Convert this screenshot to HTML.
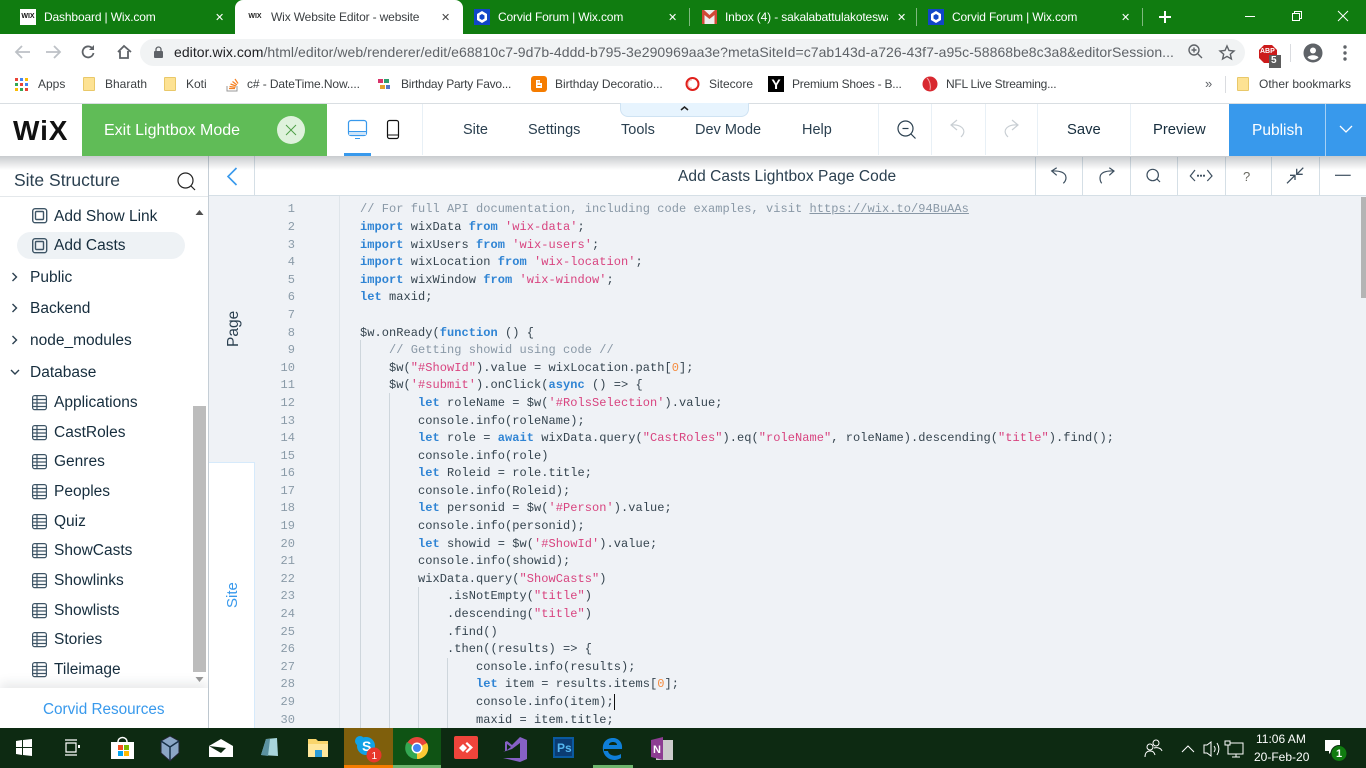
<!DOCTYPE html>
<html><head><meta charset="utf-8"><title>Wix Website Editor</title>
<style>
html,body{margin:0;padding:0;width:1366px;height:768px;overflow:hidden;background:#fff;font-family:"Liberation Sans",sans-serif}
.a{position:absolute;white-space:nowrap}
svg{position:absolute;overflow:visible}
.tab{color:#fff;font-size:12px;letter-spacing:-.15px;top:10px}
.x{color:#fff;font-size:11px;top:11px}
.bm{font-size:12px;color:#3c4043;top:77px}
.folder{position:absolute;top:77px;width:12px;height:14px;background:#fde293;border:1px solid #e9c869;box-sizing:border-box;border-radius:1px}
.menu{font-size:14.5px;color:#2b4050;top:122px}
.dv{position:absolute;top:104px;height:51px;width:1px;background:#e8f0f6}
.side{font-size:15.5px;color:#162d3d;left:54px}
.tree{font-size:15.5px;color:#162d3d;left:30px}
.ed{position:absolute;top:157px;height:38px;width:1px;background:#d5dfe6}
pre{margin:0;position:absolute;font-family:"Liberation Mono",monospace;font-size:12px;line-height:17.6px;letter-spacing:.048px}
.k{color:#2f84d4;font-weight:bold}.s{color:#d8437f}.n{color:#f58c3f}.c{color:#8998a6}
.g{position:absolute;width:1px;background:#ced6dc}
</style></head><body>

<!-- tab strip -->
<div class="a" style="left:0;top:0;width:1366px;height:34px;background:#107c10"></div>
<div class="a" style="left:235px;top:0;width:228px;height:34px;background:#fff;border-radius:8px 8px 0 0"></div>
<div class="a" style="left:20px;top:9px;width:16px;height:16px;background:#fff;color:#111;font:bold 7px 'Liberation Sans',sans-serif;line-height:16px;text-align:center">WIX</div>
<div class="a tab" style="left:44px">Dashboard | Wix.com</div>
<div class="a x" style="left:215px">✕</div>
<div class="a" style="left:247px;top:9px;width:16px;height:16px;color:#222;font:bold 7px 'Liberation Sans',sans-serif;line-height:16px;text-align:center">WIX</div>
<div class="a tab" style="left:271px;color:#3c4043;width:158px;overflow:hidden">Wix Website Editor - website</div>
<div class="a x" style="left:441px;color:#444">✕</div>
<svg style="left:474px;top:9px" width="16" height="16"><rect width="16" height="16" fill="#1146c8"/><path d="M8 2l5 3v6l-5 3-5-3V5z" fill="#fff"/><path d="M8 5l2.500 1.500v3L8 11 5.500 9.500v-3z" fill="#1146c8"/></svg>
<div class="a tab" style="left:498px">Corvid Forum | Wix.com</div>
<div class="a x" style="left:668px">✕</div>
<div class="a" style="left:689px;top:8px;width:1px;height:18px;background:#7fb97f"></div>
<svg style="left:702px;top:10px" width="15" height="14"><rect width="15" height="14" fill="#eee"/><path d="M0 0h2l5.500 5L13 0h2v14h-2.500V5L7.500 9 2.500 5v9H0z" fill="#d14836"/></svg>
<div class="a tab" style="left:725px;width:163px;overflow:hidden">Inbox (4) - sakalabattulakoteswar</div>
<div class="a x" style="left:897px">✕</div>
<div class="a" style="left:916px;top:8px;width:1px;height:18px;background:#7fb97f"></div>
<svg style="left:928px;top:9px" width="16" height="16"><rect width="16" height="16" fill="#1146c8"/><path d="M8 2l5 3v6l-5 3-5-3V5z" fill="#fff"/><path d="M8 5l2.500 1.500v3L8 11 5.500 9.500v-3z" fill="#1146c8"/></svg>
<div class="a tab" style="left:952px">Corvid Forum | Wix.com</div>
<div class="a x" style="left:1121px">✕</div>
<div class="a" style="left:1142px;top:8px;width:1px;height:18px;background:#7fb97f"></div>
<svg style="left:1159px;top:11px" width="12" height="12"><path d="M6 0v12M0 6h12" stroke="#fff" stroke-width="2"/></svg>
<svg style="left:1245px;top:10px" width="105" height="14" fill="none" stroke="#fff"><path d="M0 6.500h10"/><rect x="47.500" y="3.500" width="7" height="7"/><path d="M49.500 3.500v-2h7v7h-2"/><path d="M93 1l10 10M103 1L93 11"/></svg>

<!-- toolbar -->
<svg style="left:14px;top:44px" width="120" height="16" fill="none"><path d="M16 8H2M8 2L2 8l6 6" stroke="#bdc1c6" stroke-width="1.800"/><path d="M32 8h14M40 2l6 6-6 6" stroke="#bdc1c6" stroke-width="1.800"/><path d="M78 4a5.500 5.500 0 1 0 1.500 5" stroke="#5f6368" stroke-width="1.800"/><path d="M80 1v5h-5z" fill="#5f6368"/><path d="M104 8l6-6 7 6M106 7v7h8V7" stroke="#5f6368" stroke-width="1.800"/></svg>
<div class="a" style="left:140px;top:39px;width:1105px;height:27px;background:#f1f3f4;border-radius:14px"></div>
<svg style="left:154px;top:46px" width="10" height="13"><rect y="5" width="9" height="7" rx="1" fill="#5f6368"/><path d="M2 6V3.500a2.500 2.500 0 0 1 5 0V6" fill="none" stroke="#5f6368" stroke-width="1.300"/></svg>
<div class="a" style="left:174px;top:44px;font-size:14px;color:#5f6368;letter-spacing:.055px"><span style="color:#202124">editor.wix.com</span>/html/editor/web/renderer/edit/e68810c7-9d7b-4ddd-b795-3e290969aa3e?metaSiteId=c7ab143d-a726-43f7-a95c-58868be8c3a8&amp;editorSession...</div>
<svg style="left:1188px;top:44px" width="50" height="16" fill="none" stroke="#5f6368" stroke-width="1.400"><circle cx="6" cy="6" r="5"/><path d="M10 10l4 4M3.500 6h5M6 3.500v5"/><path d="M39 2l2 4.500 5 .5-3.700 3.200 1.100 4.800-4.400-2.600-4.400 2.600 1.100-4.800L32 7l5-.5z"/></svg>
<svg style="left:1258px;top:44px" width="26" height="24"><path d="M6 1h8l5 5v8l-5 5H6l-5-5V6z" fill="#cc1b1b"/><rect x="11" y="11" width="12" height="13" fill="#5c5c5c"/></svg>
<div class="a" style="left:1260px;top:48px;color:#fff;font:bold 7px 'Liberation Sans',sans-serif">ABP</div>
<div class="a" style="left:1271px;top:55px;color:#fff;font:bold 10px 'Liberation Sans',sans-serif">5</div>
<div class="a" style="left:1290px;top:44px;width:1px;height:18px;background:#dadce0"></div>
<svg style="left:1303px;top:43px" width="20" height="20"><circle cx="10" cy="10" r="9.500" fill="#5f6368"/><circle cx="10" cy="7.500" r="3" fill="#fff"/><path d="M4.500 14.500c1.500-3 9.500-3 11 0a7.500 7.500 0 0 1-11 0z" fill="#fff"/></svg>
<svg style="left:1343px;top:45px" width="4" height="16" fill="#5f6368"><circle cx="2" cy="2" r="1.700"/><circle cx="2" cy="8" r="1.700"/><circle cx="2" cy="14" r="1.700"/></svg>

<!-- bookmarks -->
<svg style="left:15px;top:78px" width="13" height="13"><g fill="#ea4335"><rect width="3" height="3"/></g><rect x="5" width="3" height="3" fill="#4285f4"/><rect x="10" width="3" height="3" fill="#fbbc05"/><rect y="5" width="3" height="3" fill="#34a853"/><rect x="5" y="5" width="3" height="3" fill="#ea4335"/><rect x="10" y="5" width="3" height="3" fill="#4285f4"/><rect y="10" width="3" height="3" fill="#fbbc05"/><rect x="5" y="10" width="3" height="3" fill="#34a853"/><rect x="10" y="10" width="3" height="3" fill="#ea4335"/></svg>
<div class="a bm" style="left:38px">Apps</div>
<div class="folder" style="left:83px"></div><div class="a bm" style="left:105px">Bharath</div>
<div class="folder" style="left:164px"></div><div class="a bm" style="left:186px">Koti</div>
<svg style="left:226px;top:77px" width="13" height="15" fill="none"><path d="M1 9v5h10V9" stroke="#999"/><path d="M3 11.500h6M3.500 9.500l6 .8M4.500 7l5.500 2M6.500 4.500l4.500 3.500M9 2l3 4.500" stroke="#f48024" stroke-width="1.200"/></svg>
<div class="a bm" style="left:247px;letter-spacing:-.1px">c# - DateTime.Now....</div>
<svg style="left:378px;top:78px" width="13" height="13"><rect x="0" y="1" width="5" height="4" fill="#d8336b"/><rect x="6" y="1" width="5" height="4" fill="#2f9e6e"/><rect x="2" y="7" width="5" height="4" fill="#e2a12c"/><rect x="8" y="7" width="4" height="4" fill="#5477c5"/></svg>
<div class="a bm" style="left:401px;letter-spacing:-.24px">Birthday Party Favo...</div>
<svg style="left:531px;top:76px" width="16" height="16"><rect width="16" height="16" rx="3" fill="#f57c00"/><path d="M5 4h4v3h2v5H5z" fill="#fff"/><rect x="6.500" y="5.500" width="2" height="1" fill="#f57c00"/><rect x="6.500" y="9" width="3" height="1" fill="#f57c00"/></svg>
<div class="a bm" style="left:555px;letter-spacing:-.05px">Birthday Decoratio...</div>
<svg style="left:685px;top:76px" width="15" height="16" fill="none"><circle cx="7.500" cy="8" r="6" stroke="#e0201b" stroke-width="2"/><path d="M7 4a4 4 0 0 0 0 8" stroke="#f5b5b0"/></svg>
<div class="a bm" style="left:709px">Sitecore</div>
<div class="a" style="left:768px;top:76px;width:16px;height:16px;background:#000;color:#fff;font:bold 14px/16px 'Liberation Sans',sans-serif;text-align:center">Y</div>
<div class="a bm" style="left:792px;letter-spacing:-.22px">Premium Shoes - B...</div>
<svg style="left:922px;top:76px" width="16" height="16"><circle cx="8" cy="8" r="7.500" fill="#d8282f"/><path d="M5 2c3 3 4 8 3 12" stroke="#f4a9a9" fill="none"/></svg>
<div class="a bm" style="left:946px;letter-spacing:-.25px">NFL Live Streaming...</div>
<div class="a" style="left:1205px;top:76px;font-size:13px;color:#5f6368">»</div>
<div class="a" style="left:1225px;top:76px;width:1px;height:17px;background:#dadce0"></div>
<div class="folder" style="left:1237px"></div><div class="a bm" style="left:1259px">Other bookmarks</div>

<!-- wix top bar -->
<div class="a" style="left:0;top:103px;width:1366px;height:1px;background:#d9dee2"></div>
<div class="a" style="left:620px;top:103px;width:129px;height:14px;background:#e7f4fe;border:1px solid #cfe3f3;border-top:0;border-radius:0 0 8px 8px;box-sizing:border-box"></div>
<svg style="left:680px;top:105px" width="9" height="6"><path d="M1 5l3.500-3L8 5" fill="none" stroke="#222" stroke-width="1.500"/></svg>
<div class="a" style="left:13px;top:113px;font:bold 28px/36px 'Liberation Sans',sans-serif;color:#111;letter-spacing:.9px">WiX</div>
<div class="a" style="left:82px;top:104px;width:245px;height:52px;background:#60bc57"></div>
<div class="a" style="left:104px;top:122px;font-size:16px;color:#fff;font-weight:normal">Exit Lightbox Mode</div>
<div class="a" style="left:277px;top:116px;width:28px;height:28px;border-radius:50%;background:#dff2dc"></div>
<svg style="left:285px;top:124px" width="12" height="12"><path d="M1 1l10 10M11 1L1 11" stroke="#4f9f47" stroke-width="1"/></svg>
<svg style="left:348px;top:120px" width="52" height="22" fill="none"><rect x=".5" y=".5" width="18" height="15" rx="2.500" stroke="#3899ec" stroke-width="1.200"/><path d="M1 11.500h17" stroke="#3899ec"/><rect x="1" y="12" width="17" height="3" fill="#cfe5f9"/><path d="M7 18.500h5" stroke="#3899ec"/><rect x="39.500" y=".5" width="11" height="18" rx="2" stroke="#111" stroke-width="1.200"/><path d="M40 15h10" stroke="#111"/></svg>
<div class="a" style="left:344px;top:153px;width:27px;height:3px;background:#3899ec"></div>
<div class="dv" style="left:422px"></div>
<div class="a menu" style="left:463px">Site</div>
<div class="a menu" style="left:528px">Settings</div>
<div class="a menu" style="left:621px">Tools</div>
<div class="a menu" style="left:695px">Dev Mode</div>
<div class="a menu" style="left:802px">Help</div>
<div class="dv" style="left:878px"></div><div class="dv" style="left:931px"></div><div class="dv" style="left:985px"></div><div class="dv" style="left:1037px"></div><div class="dv" style="left:1130px"></div>
<svg style="left:897px;top:120px" width="20" height="20" fill="none" stroke="#2b4050" stroke-width="1.200"><circle cx="8.500" cy="8.500" r="7.500"/><path d="M5.500 8.500h6"/><path d="M14 14l4.500 4.500"/></svg>
<svg style="left:950px;top:120px" width="70" height="20" fill="none" stroke="#c8ced3" stroke-width="1.200"><path d="M7 0L1 5l6 5"/><path d="M1 5c10-1 17 5 10 12"/><path d="M62 0l6 5-6 5"/><path d="M68 5c-10-1-17 5-10 12"/></svg>
<div class="a menu" style="left:1067px;color:#162d3d;font-size:14.8px">Save</div>
<div class="a menu" style="left:1153px;color:#162d3d;font-size:14.8px">Preview</div>
<div class="a" style="left:1229px;top:104px;width:137px;height:52px;background:#3899ec"></div>
<div class="a" style="left:1325px;top:104px;width:1px;height:52px;background:#a5d0f5"></div>
<div class="a" style="left:1252px;top:122px;font-size:15.5px;color:#fff">Publish</div>
<svg style="left:1339px;top:125px" width="14" height="8"><path d="M1 1l6 6 6-6" fill="none" stroke="#fff" stroke-width="1.300"/></svg>

<!-- sidebar -->
<div class="a" style="left:208px;top:156px;width:1px;height:572px;background:#c5ced6"></div>
<div class="a" style="left:14px;top:170px;font-size:17.5px;color:#2b4050">Site Structure</div>
<svg style="left:177px;top:172px" width="19" height="19" fill="none" stroke="#222" stroke-width="1.200"><circle cx="8.500" cy="8.500" r="7.500"/><path d="M14 14l4 4"/></svg>
<div class="a" style="left:0;top:196px;width:208px;height:1px;background:#e4e8eb"></div>
<div class="a" style="left:17px;top:232px;width:168px;height:27px;background:#eef2f5;border-radius:14px"></div>
<div class="a" style="left:193px;top:406px;width:13px;height:266px;background:#bcbcbc"></div>
<svg style="left:194px;top:210px" width="11" height="6"><path d="M5.500 0l4 5h-8z" fill="#505050"/></svg>
<svg style="left:194px;top:677px" width="11" height="6"><path d="M5.500 5l4-5h-8z" fill="#9a9a9a"/></svg>
<svg style="left:32px;top:208px" width="16" height="46" fill="none" stroke="#3e5566"><rect x=".7" y=".7" width="14" height="14" rx="2.500" stroke-width="1.400"/><rect x="3.500" y="3.500" width="8" height="8" rx="1" stroke-width="1.400"/><rect x=".7" y="30.700" width="14" height="14" rx="2.500" stroke-width="1.400"/><rect x="3.500" y="33.500" width="8" height="8" rx="1" stroke-width="1.400"/></svg>
<div class="a side" style="top:208px">Add Show Link</div>
<div class="a side" style="top:237px">Add Casts</div>
<svg style="left:11px;top:272px" width="8" height="108" fill="none" stroke="#2b4050" stroke-width="1.400"><path d="M1.500 1l4 4-4 4M1.500 32l4 4-4 4M1.500 64l4 4-4 4M0 98l4 4 4-4"/></svg>
<div class="a tree" style="top:269px">Public</div>
<div class="a tree" style="top:300px">Backend</div>
<div class="a tree" style="top:332px">node_modules</div>
<div class="a tree" style="top:364px">Database</div>
<svg style="left:32px;top:395px" width="15" height="285" fill="none" stroke="#3e5566" stroke-width="1.200">
<g id="t"><rect x=".6" y=".6" width="13.800" height="14" rx="2"/><path d="M1 4.500h13M1 8h13M1 11.500h13M5 1v13"/></g>
<g transform="translate(0,30)"><rect x=".6" y=".6" width="13.800" height="14" rx="2"/><path d="M1 4.500h13M1 8h13M1 11.500h13M5 1v13"/></g>
<g transform="translate(0,59)"><rect x=".6" y=".6" width="13.800" height="14" rx="2"/><path d="M1 4.500h13M1 8h13M1 11.500h13M5 1v13"/></g>
<g transform="translate(0,89)"><rect x=".6" y=".6" width="13.800" height="14" rx="2"/><path d="M1 4.500h13M1 8h13M1 11.500h13M5 1v13"/></g>
<g transform="translate(0,119)"><rect x=".6" y=".6" width="13.800" height="14" rx="2"/><path d="M1 4.500h13M1 8h13M1 11.500h13M5 1v13"/></g>
<g transform="translate(0,148)"><rect x=".6" y=".6" width="13.800" height="14" rx="2"/><path d="M1 4.500h13M1 8h13M1 11.500h13M5 1v13"/></g>
<g transform="translate(0,178)"><rect x=".6" y=".6" width="13.800" height="14" rx="2"/><path d="M1 4.500h13M1 8h13M1 11.500h13M5 1v13"/></g>
<g transform="translate(0,208)"><rect x=".6" y=".6" width="13.800" height="14" rx="2"/><path d="M1 4.500h13M1 8h13M1 11.500h13M5 1v13"/></g>
<g transform="translate(0,237)"><rect x=".6" y=".6" width="13.800" height="14" rx="2"/><path d="M1 4.500h13M1 8h13M1 11.500h13M5 1v13"/></g>
<g transform="translate(0,267)"><rect x=".6" y=".6" width="13.800" height="14" rx="2"/><path d="M1 4.500h13M1 8h13M1 11.500h13M5 1v13"/></g>
</svg>
<div class="a side" style="top:394px">Applications</div>
<div class="a side" style="top:424px">CastRoles</div>
<div class="a side" style="top:453px">Genres</div>
<div class="a side" style="top:483px">Peoples</div>
<div class="a side" style="top:513px">Quiz</div>
<div class="a side" style="top:542px">ShowCasts</div>
<div class="a side" style="top:572px">Showlinks</div>
<div class="a side" style="top:602px">Showlists</div>
<div class="a side" style="top:631px">Stories</div>
<div class="a side" style="top:661px">Tileimage</div>
<div class="a" style="left:0;top:688px;width:208px;height:40px;background:#fff;box-shadow:0 -5px 10px rgba(40,50,60,.1)"></div>
<div class="a" style="left:43px;top:701px;font-size:15.3px;color:#3899ec">Corvid Resources</div>

<!-- editor -->
<div class="a" style="left:209px;top:196px;width:1157px;height:532px;background:#eff2f6"></div>
<div class="a" style="left:209px;top:462px;width:46px;height:266px;background:#fff;border-top:1px solid #d6eafb;border-right:1px solid #d6eafb;box-sizing:border-box"></div>
<div class="a" style="left:254px;top:156px;width:1px;height:40px;background:#d5dfe6"></div>
<div class="a" style="left:209px;top:195px;width:1157px;height:1px;background:#d5dfe6"></div>
<svg style="left:226px;top:167px" width="12" height="19"><path d="M10.500 1L2 9.500l8.500 8.500" fill="none" stroke="#3899ec" stroke-width="1.600"/></svg>
<div class="a" style="left:678px;top:168px;font-size:15.5px;letter-spacing:.07px;color:#2b4050">Add Casts Lightbox Page Code</div>
<div class="ed" style="left:1035px"></div><div class="ed" style="left:1082px"></div><div class="ed" style="left:1130px"></div><div class="ed" style="left:1177px"></div><div class="ed" style="left:1225px"></div><div class="ed" style="left:1271px"></div><div class="ed" style="left:1319px"></div>
<svg style="left:1050px;top:166px" width="300" height="20" fill="none" stroke="#3e5060" stroke-width="1.200">
<path d="M6.700 1.700L1.700 5l5 4.300"/><path d="M1.700 5c8-.5 14.300 1.500 14.300 6.700 0 2-1 4-2.700 5.600"/>
<path d="M59.300 1.700L64 5l-4.700 4.300"/><path d="M64 5c-8-.5-14 1.500-14 6.700 0 2 .5 4 1.700 5.600"/>
<circle cx="102.700" cy="9" r="5.700"/><path d="M106.700 12.700l3.300 3.300"/>
<path d="M145 4l-4.700 6 4.700 5M157.300 4l4.700 6-4.700 5"/><path d="M147 9.700h2M150 9.700h2M153 9.700h2" stroke-width="1.800"/>
<path d="M237 17.300l8-8M240 9.300h5v4.700M253.300 1.700l-6.600 6.600M246.700 2.700v5.600h6" stroke-width="1.300"/>
<path d="M285 9.300h15.700"/>
</svg>
<div class="a" style="left:1243px;top:169px;font-size:13px;color:#6b6a62">?</div>
<div class="a" style="left:225px;top:330px;font-size:15.5px;color:#2b4050;transform:rotate(-90deg);transform-origin:center;width:18px;text-align:center;line-height:16px;">Page</div>
<div class="a" style="left:224px;top:591px;font-size:15px;color:#3899ec;transform:rotate(-90deg);transform-origin:center;width:18px;text-align:center;line-height:16px;">Site</div>

<div class="g" style="left:339px;top:196px;height:532px;background:#dfe5ea"></div>
<div class="g" style="left:360px;top:340px;height:388px"></div>
<div class="g" style="left:389px;top:393px;height:335px"></div>
<div class="g" style="left:418px;top:587px;height:141px"></div>
<div class="g" style="left:447px;top:658px;height:70px"></div>
<div class="a" style="left:1361px;top:197px;width:5px;height:101px;background:#b4b4b4"></div>

<pre style="left:259px;top:201.4px;width:36px;text-align:right;color:#8a9ba8">1
2
3
4
5
6
7
8
9
10
11
12
13
14
15
16
17
18
19
20
21
22
23
24
25
26
27
28
29
30</pre>
<pre style="left:360px;top:201.4px;color:#35444f;height:526px;overflow:hidden"><span class="c">// For full API documentation, including code examples, visit <u>https://wix.to/94BuAAs</u></span>
<span class="k">import</span> wixData <span class="k">from</span> <span class="s">'wix-data'</span>;
<span class="k">import</span> wixUsers <span class="k">from</span> <span class="s">'wix-users'</span>;
<span class="k">import</span> wixLocation <span class="k">from</span> <span class="s">'wix-location'</span>;
<span class="k">import</span> wixWindow <span class="k">from</span> <span class="s">'wix-window'</span>;
<span class="k">let</span> maxid;

$w.onReady(<span class="k">function</span> () {
    <span class="c">// Getting showid using code //</span>
    $w(<span class="s">"#ShowId"</span>).value = wixLocation.path[<span class="n">0</span>];
    $w(<span class="s">'#submit'</span>).onClick(<span class="k">async</span> () =&gt; {
        <span class="k">let</span> roleName = $w(<span class="s">'#RolsSelection'</span>).value;
        console.info(roleName);
        <span class="k">let</span> role = <span class="k">await</span> wixData.query(<span class="s">"CastRoles"</span>).eq(<span class="s">"roleName"</span>, roleName).descending(<span class="s">"title"</span>).find();
        console.info(role)
        <span class="k">let</span> Roleid = role.title;
        console.info(Roleid);
        <span class="k">let</span> personid = $w(<span class="s">'#Person'</span>).value;
        console.info(personid);
        <span class="k">let</span> showid = $w(<span class="s">'#ShowId'</span>).value;
        console.info(showid);
        wixData.query(<span class="s">"ShowCasts"</span>)
            .isNotEmpty(<span class="s">"title"</span>)
            .descending(<span class="s">"title"</span>)
            .find()
            .then((results) =&gt; {
                console.info(results);
                <span class="k">let</span> item = results.items[<span class="n">0</span>];
                console.info(item);
                maxid = item.title;</pre>
<div class="a" style="left:614px;top:694px;width:1px;height:16px;background:#111"></div>

<!-- top bar shadow -->
<div class="a" style="left:0;top:156px;width:1366px;height:14px;background:linear-gradient(rgba(60,70,80,.28),rgba(60,70,80,0))"></div>

<!-- taskbar -->
<div class="a" style="left:0;top:728px;width:1366px;height:40px;background:#0d2a12"></div>
<div class="a" style="left:344px;top:728px;width:49px;height:40px;background:#7f5f0c"></div>
<div class="a" style="left:344px;top:765px;width:49px;height:3px;background:#f57c00"></div>
<div class="a" style="left:393px;top:728px;width:48px;height:40px;background:#0f5314"></div>
<div class="a" style="left:393px;top:765px;width:48px;height:3px;background:#6db56d"></div>
<div class="a" style="left:593px;top:765px;width:40px;height:3px;background:#6db56d"></div>
<svg style="left:0;top:728px" width="700" height="40">
<path d="M16 13l6-1v7h-6zM23 12l9-1v8h-9zM16 20h6v7l-6-1zM23 20h9v8l-9-1z" fill="#fff"/>
<path d="M65 12h12M65 27h12M66 15h10v9H66z" fill="none" stroke="#fff" stroke-width="1.200"/><rect x="78" y="17" width="2" height="3" fill="#fff"/>
<path d="M111 14h23v17h-23z" fill="#fff"/><path d="M118 14c0-6 9-6 9 0" fill="none" stroke="#fff" stroke-width="1.500"/><rect x="118" y="17" width="5" height="5" fill="#f25022"/><rect x="124" y="17" width="5" height="5" fill="#7fba00"/><rect x="118" y="23" width="5" height="5" fill="#00a4ef"/><rect x="124" y="23" width="5" height="5" fill="#ffb900"/>
<path d="M170 8l9 5v12l-9 8-9-8V13z" fill="#8ba6c6" stroke="#223" stroke-width="1"/><path d="M161 13l9 6 9-6M170 19v13" stroke="#183048" fill="none" stroke-width="1.500"/>
<path d="M209 18l12-7 12 7v11h-24z" fill="#fff"/><path d="M209 18l17 2-5 5z" fill="#0d2a12"/>
<path d="M261 27l5-16 11-1 1 18z" fill="#a8d6dc"/><path d="M261 27l5-16 4 0-2 17z" fill="#5b92a0"/>
<path d="M308 11h8l2 2h10v16h-20z" fill="#f9d56c"/><rect x="308" y="16" width="20" height="13" fill="#ffe79c"/><rect x="315" y="22" width="7" height="7" fill="#2b9bd7"/>
<circle cx="366" cy="18" r="9" fill="#10a2e6"/><circle cx="360" cy="13" r="5" fill="#10a2e6"/><text x="362" y="23" font-family="Liberation Sans,sans-serif" font-weight="bold" font-size="14" fill="#fff">S</text><circle cx="374" cy="27" r="7.500" fill="#e8372b"/><text x="371.500" y="31" font-family="Liberation Sans,sans-serif" font-size="10" fill="#fff">1</text>
<circle cx="417" cy="20" r="11" fill="#e8453c"/><path d="M417 20L427 15a11 11 0 0 1-10 16z" fill="#fcc934"/><path d="M417 20v11a11 11 0 0 1-10-17z" fill="#34a853"/><circle cx="417" cy="20" r="5.500" fill="#fff"/><circle cx="417" cy="20" r="4" fill="#4285f4"/>
<rect x="454" y="8" width="24" height="23" rx="2" fill="#ef443b"/><path d="M459 20l4-4 4 4-4 4zM467 14l6 5.500-6 5.500-1.500-1.500 4-4-4-4z" fill="#fff"/>
<path d="M503 24l2-1V14l2-1 5 4 8-8 7 3v19l-7 3-17-4 17 0V15l-8 6z" fill="#8661c5"/><path d="M507 16l4 3-4 3z" fill="#0d2a12"/>
<rect x="553" y="9" width="21" height="21" fill="#0a5aa0"/><rect x="555" y="11" width="17" height="17" fill="#0b3c73"/><text x="557" y="24" font-family="Liberation Sans,sans-serif" font-weight="bold" font-size="12" fill="#54b7f0">Ps</text>
<path d="M604 21h18c1-7-4-11-9-11-7 0-11 5-10 12 1 8 10 13 18 8v-4c-5 3-12 2-13-3h-4zm5-4c0-4 8-4 8 0z" fill="#0f7fd8"/>
<rect x="656" y="12" width="17" height="20" fill="#ccc"/><path d="M651 12l12-3v23l-12-3z" fill="#8d3d92"/><text x="653" y="25" font-family="Liberation Sans,sans-serif" font-weight="bold" font-size="11" fill="#fff">N</text>
</svg>
<svg style="left:1144px;top:738px" width="110" height="22" fill="none" stroke="#fff" stroke-width="1"><circle cx="12" cy="5" r="3"/><circle cx="6" cy="9" r="3"/><path d="M1 19c0-4 2-6 5-6s4 1 5 4M10 10c3-1 7 0 8 3"/><path d="M38 14l6-6 6 6"/><path d="M60 7h3l4-3v14l-4-3h-3zM70 8c1.500 2 1.500 4 0 6M73 5c2.500 4 2.500 8 0 12"/><path d="M84 5h15v11H84zM88 19h8M92 16v3"/><rect x="81" y="3" width="5" height="4" fill="#0d2a12"/></svg>
<div class="a" style="left:1256px;top:732px;font-size:12px;color:#fff">11:06 AM</div>
<div class="a" style="left:1254px;top:750px;font-size:12px;color:#fff">20-Feb-20</div>
<svg style="left:1324px;top:739px" width="26" height="26"><path d="M1 1h15v11H8l-3 3v-3H1z" fill="#fff"/><circle cx="15" cy="14.500" r="8" fill="#107c10" stroke="#0d2a12"/></svg>
<div class="a" style="left:1336px;top:748px;font:bold 11px 'Liberation Sans',sans-serif;color:#fff">1</div>

</body></html>
